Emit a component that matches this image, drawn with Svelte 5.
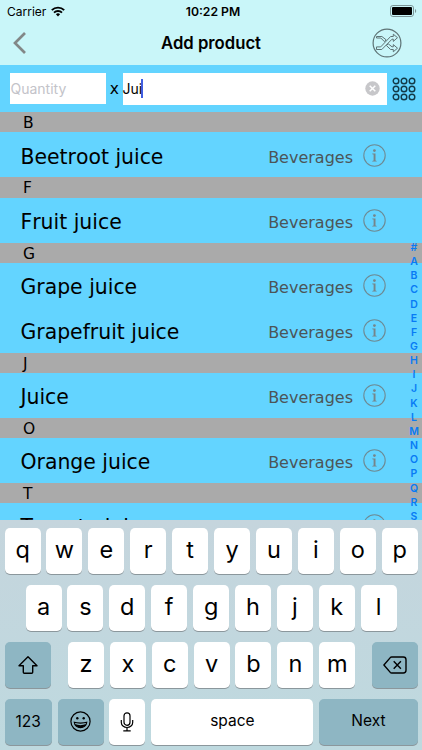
<script lang="ts">
  let quantity = "";
  let search = "Jui";

  const sections = [
    { letter: "B", products: ["Beetroot juice"] },
    { letter: "F", products: ["Fruit juice"] },
    { letter: "G", products: ["Grape juice", "Grapefruit juice"] },
    { letter: "J", products: ["Juice"] },
    { letter: "O", products: ["Orange juice"] },
    { letter: "T", products: ["Tomato juice"] },
  ];

  const index = "#ABCDEFGHIJKLMNOPQRS".split("");
  const topKeys = "qwertyuiop".split("");
  const middleKeys = "asdfghjkl".split("");
  const bottomKeys = "zxcvbnm".split("");
  const dots = [4, 12, 20];
</script>

<style>
  :global(body) {
    background: #63d4ff;
  }

  .screen {
    display: flex;
    flex-direction: column;
    width: 422px;
    height: 750px;
    overflow: hidden;
    font-family: Inter, "Liberation Sans", sans-serif;
    color: #000;
    background: #63d4ff;
  }

  .top {
    flex: none;
    height: 65px;
    background: #c9f6f9;
  }

  .status,
  nav {
    display: grid;
    grid-template-columns: 1fr auto 1fr;
    align-items: center;
  }

  .status {
    height: 22px;
    padding: 0 5px 0 7px;
    font-size: 12px;
  }

  .carrier {
    display: flex;
    align-items: center;
    gap: 5px;
  }

  .time {
    padding-left: 2px;
    font-weight: 600;
    font-size: 12.2px;
  }

  .battery {
    justify-self: end;
  }

  nav {
    height: 42px;
    padding: 0 20px 0 12px;
  }

  h1 {
    margin: 0;
    font-size: 16.7px;
    font-weight: 600;
    padding-left: 8px;
  }

  .shuffle {
    justify-self: end;
  }

  svg {
    display: block;
    flex: none;
  }

  .search {
    flex: none;
    display: flex;
    align-items: center;
    height: 47.4px;
    padding: 0 6px 0 10px;
    box-sizing: border-box;
    font-size: 14px;
  }

  .field {
    display: flex;
    align-items: center;
    background: #fff;
    box-sizing: border-box;
  }

  .quantity {
    width: 96px;
    height: 31px;
    padding-left: 0.5px;
    color: #c3c3c9;
  }

  .times {
    width: 16.5px;
    padding-top: 1px;
    text-align: center;
    font-family: "DejaVu Sans", sans-serif;
    font-size: 15.5px;
  }

  .name {
    width: 264.5px;
    height: 32px;
    padding-right: 7px;
  }

  .caret {
    width: 2px;
    height: 19px;
    margin-left: -1px;
    background: #405ee0;
  }

  .clear {
    margin-left: auto;
  }

  .grid {
    margin-left: auto;
  }

  .list {
    position: relative;
    flex: 1;
    min-height: 0;
    overflow: hidden;
    font-family: "DejaVu Sans", sans-serif;
  }

  h2 {
    margin: 0;
    padding-left: 23px;
    height: 20.1px;
    line-height: 23px;
    font-size: 15.5px;
    font-weight: 400;
    background: #aaa;
  }

  .product {
    display: flex;
    align-items: center;
    height: 45px;
    padding: 0 36px 0 20.5px;
  }

  .product .title {
    flex: 1;
    font-size: 20.4px;
    font-kerning: none;
    padding-top: 4px;
  }

  .product svg {
    margin-top: 1px;
  }

  .category {
    font-size: 16px;
    color: #4c5558;
    padding-top: 5px;
    margin-right: 10px;
  }

  .index {
    position: absolute;
    top: 128.5px;
    right: 0;
    width: 16px;
    text-align: center;
    font: 600 10.5px/14.15px Inter, sans-serif;
    color: #087bf5;
  }

  .keyboard {
    flex: none;
    display: flex;
    flex-direction: column;
    gap: 10.9px;
    height: 230.5px;
    padding: 8.2px 4.3px 0 4.5px;
    box-sizing: border-box;
    background: linear-gradient(#c5d5dd, #bed9df);
  }

  .keys {
    display: flex;
    justify-content: center;
    gap: 5.9px;
    height: 46.1px;
  }

  .keys.spread {
    justify-content: space-between;
  }

  .letters {
    display: flex;
    gap: 5.9px;
    margin-left: 1px;
  }

  .key {
    display: flex;
    align-items: center;
    justify-content: center;
    width: 36px;
    box-sizing: border-box;
    padding-bottom: 3px;
    border-radius: 5px;
    background: #fff;
    box-shadow: 0 1px 0 #8b979c;
    font-size: 23.5px;
    font-weight: 400;
  }

  .key.dark {
    background: #8eb6c3;
    padding-bottom: 0;
  }

  .key.wide {
    width: 46px;
  }

  .key.numbers {
    width: 47.2px;
  }

  .key.text {
    font-size: 15.5px;
    font-weight: 400;
  }

  .key.mic {
    padding: 0;
  }

  .key.space {
    flex: 1;
  }

  .key.next {
    width: 98.5px;
    padding-bottom: 3px;
  }
</style>

<div class="screen">
  <div class="top">
    <div class="status">
      <div class="carrier">
        <span>Carrier</span>
        <svg width="14" height="11" viewBox="0 0 14 11" fill="none" stroke="#000" stroke-width="1.9">
          <path d="M.8 4.2a8.8 8.8 0 0 1 12.4 0M3 6.6a5.7 5.7 0 0 1 8 0" />
          <path d="M7 10.4 4.9 8.3a3 3 0 0 1 4.2 0z" fill="#000" stroke="none" />
        </svg>
      </div>
      <span class="time">10:22 PM</span>
      <svg class="battery" width="27" height="12" viewBox="0 0 27 12">
        <rect x=".5" y=".5" width="23" height="11" rx="2.4" fill="none" stroke="#7b9698" />
        <rect x="2" y="2" width="20" height="8" rx="1" />
        <path d="M25 4v4c1.6-.6 1.6-3.4 0-4z" fill="#7b9698" />
      </svg>
    </div>
    <nav>
      <svg width="16" height="22" viewBox="0 0 16 22" fill="none" stroke="#828787" stroke-width="2.7">
        <path d="M13 1 3 11l10 10" />
      </svg>
      <h1>Add product</h1>
      <svg class="shuffle" width="30" height="30" viewBox="0 0 30 30" fill="none" stroke="#5e7375" stroke-width="1">
        <circle cx="15" cy="15" r="13.9" stroke-width="1.2" />
        <path d="M4.5 10h4.300l3.600 3.600 1.700-1.800-4.200-3.300H4.500z" />
        <path d="M4.500 21.500h5.300L20 11.200h1.300v2.200l4.200-3.700-4.200-3.500v2.300h-2.700L8.700 18.900H4.500z" />
        <path d="m16.200 15.800-1.700 1.800 4.100 3.900h2.700v2.300l4.200-3.600-4.200-3.600v2.200H20z" />
      </svg>
    </nav>
  </div>

  <div class="search">
    <div class="field quantity">{quantity || "Quantity"}</div>
    <span class="times">x</span>
    <div class="field name">
      <span>{search}</span>
      <i class="caret"></i>
      <svg class="clear" width="15" height="15" viewBox="0 0 15 15">
        <circle cx="7.5" cy="7.5" r="7.2" fill="#c7c7ca" />
        <path d="m4.7 4.7 5.6 5.6m0-5.6-5.6 5.6" stroke="#fff" stroke-width="1.5" />
      </svg>
    </div>
    <svg class="grid" width="24" height="24" viewBox="0 0 24 24" fill="none" stroke="#123a48" stroke-width="1.4">
      {#each dots as y}
        {#each dots as x}
          <circle cx={x} cy={y} r="2.8" />
        {/each}
      {/each}
    </svg>
  </div>

  <div class="list">
    {#each sections as section}
      <h2>{section.letter}</h2>
      {#each section.products as product}
        <div class="product">
          <span class="title">{product}</span>
          <span class="category">Beverages</span>
          <svg width="23" height="23" viewBox="0 0 23 23">
            <circle cx="11.5" cy="11.5" r="10.7" fill="none" stroke="#6d8b95" stroke-width="1.1" />
            <circle cx="11.4" cy="6.6" r="1.4" fill="#76858a" />
            <path d="M9.3 9.5h3.2v7l1.2.5v.6H9.2V17l1.4-.5v-5.9l-1.3-.4z" fill="#76858a" />
          </svg>
        </div>
      {/each}
    {/each}
    <div class="index">
      {#each index as letter}
        <div>{letter}</div>
      {/each}
    </div>
  </div>

  <div class="keyboard">
    <div class="keys">
      {#each topKeys as key}
        <div class="key">{key}</div>
      {/each}
    </div>
    <div class="keys">
      {#each middleKeys as key}
        <div class="key">{key}</div>
      {/each}
    </div>
    <div class="keys spread">
      <div class="key dark wide">
        <svg width="22" height="20" viewBox="0 0 22 20" fill="none" stroke="#000" stroke-width="1.4" stroke-linejoin="round">
          <path d="m11 1.800 9 9h-4.300v6.400q0 1-1 1H7.300q-1 0-1-1v-6.400H2z" />
        </svg>
      </div>
      <div class="letters">
        {#each bottomKeys as key}
          <div class="key">{key}</div>
        {/each}
      </div>
      <div class="key dark wide">
        <svg width="24" height="18" viewBox="0 0 24 18" fill="none" stroke="#000" stroke-width="1.4" stroke-linejoin="round">
          <path d="M8.700 1h11.600q2.700 0 2.700 2.700v10.600q0 2.700-2.700 2.700H8.700q-.8 0-1.400-.6L.9 9l6.400-7.400q.6-.6 1.400-.6z" />
          <path d="m10.700 5.300 7.200 7.400m0-7.400-7.200 7.400" />
        </svg>
      </div>
    </div>
    <div class="keys">
      <div class="key dark numbers text">123</div>
      <div class="key dark wide">
        <svg width="21" height="21" viewBox="0 0 21 21" fill="none" stroke="#000" stroke-width="1.2">
          <circle cx="10.5" cy="10.5" r="9.6" />
          <circle cx="7.3" cy="7.3" r="1.2" fill="#000" stroke="none" />
          <circle cx="13.7" cy="7.3" r="1.2" fill="#000" stroke="none" />
          <path d="M4.300 11.300c3 1 9.400 1 12.400 0-.6 7.200-11.800 7.200-12.400 0z" />
          <path d="M5 13c3.500 1.500 7.500 1.500 11 0-1.800 5-9.200 5-11 0z" fill="#000" stroke="none" />
        </svg>
      </div>
      <div class="key mic">
        <svg width="14" height="20" viewBox="0 0 14 20" fill="none" stroke="#000" stroke-width="1.2">
          <rect x="4" y=".8" width="6" height="12.5" rx="3" />
          <path d="M1.300 8v2.500a5.700 5 0 0 0 11.400 0V8M7 15.600v3M3.300 18.800h7.400" />
        </svg>
      </div>
      <div class="key space text">space</div>
      <div class="key dark next text">Next</div>
    </div>
  </div>
</div>
